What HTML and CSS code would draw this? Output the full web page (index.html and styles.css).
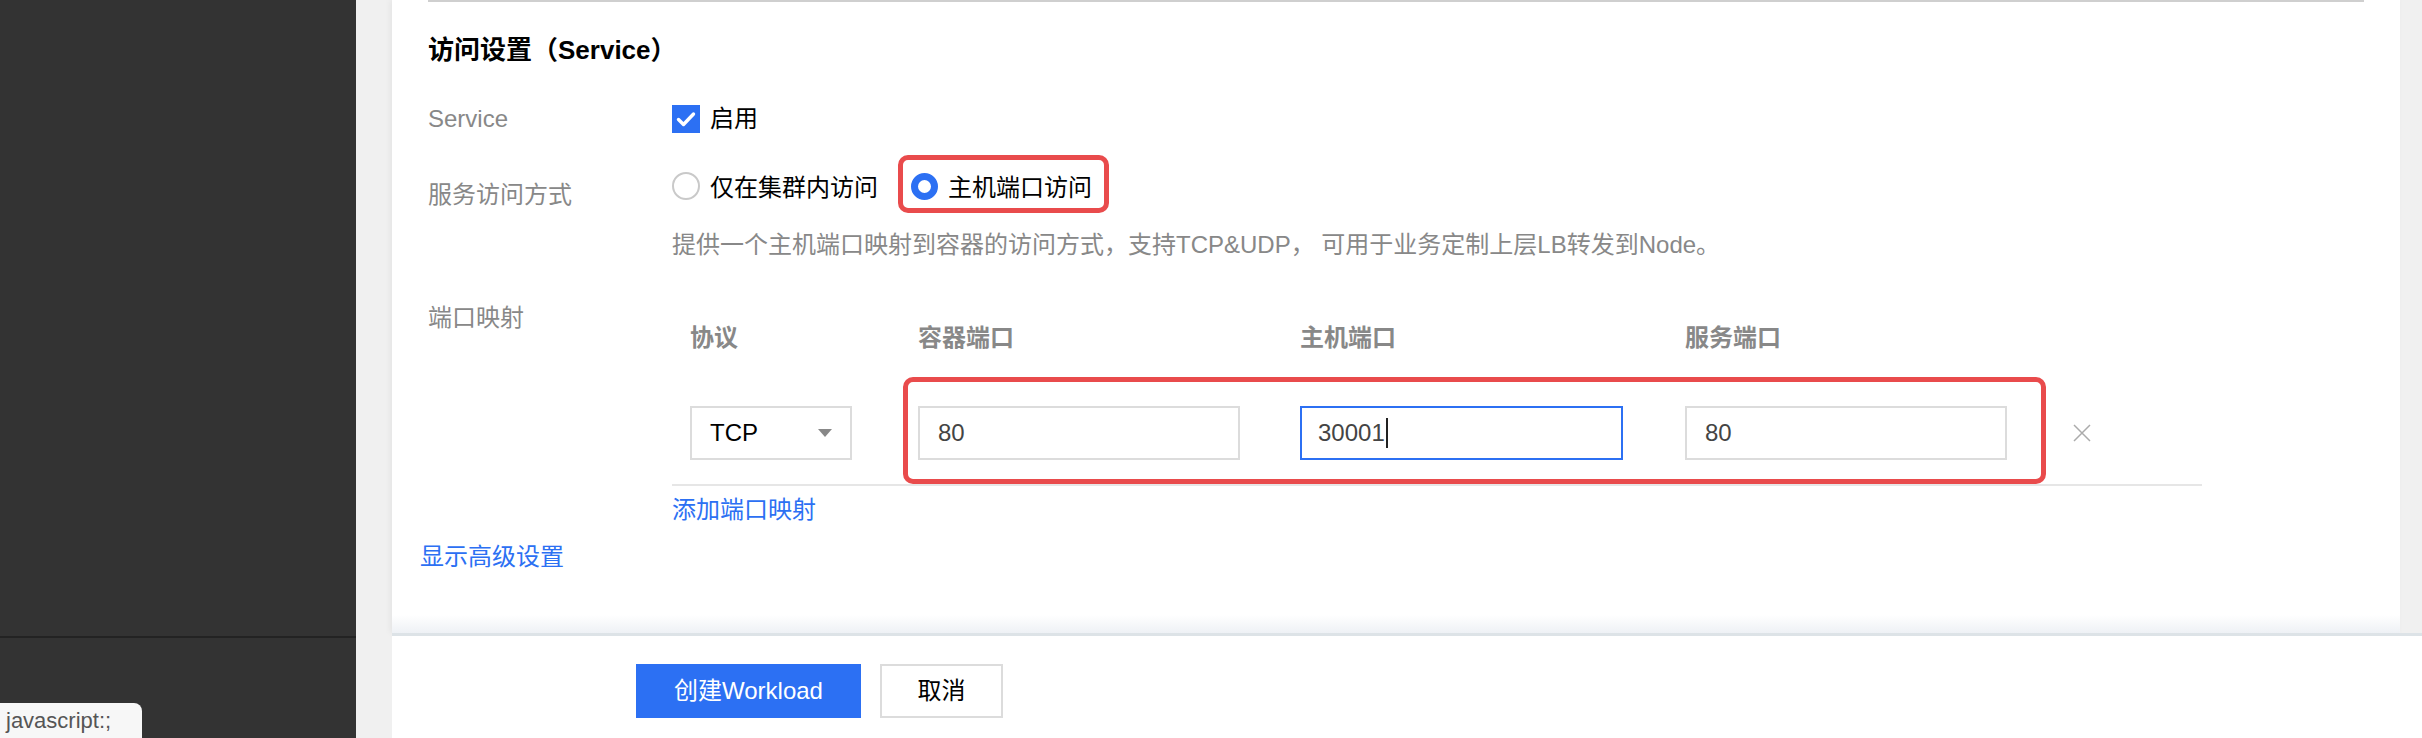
FILE: index.html
```html
<!DOCTYPE html>
<html lang="zh-CN">
<head>
<meta charset="utf-8">
<title>访问设置</title>
<link rel="stylesheet" href="styles.css">
</head>
<body>
<aside class="sidebar">
  <div class="sidebar-top"></div>
  <div class="sidebar-bottom"></div>
</aside>
<div class="main">
  <div class="panel">
    <section class="section">
      <h2 class="title">访问设置（Service）</h2>

      <div class="row row-service">
        <div class="label">Service</div>
        <div class="control">
          <label class="check">
            <svg class="checkbox" width="28" height="28" viewBox="0 0 28 28"><rect width="28" height="28" fill="#2c70f3"/><path d="M6.5 14.5 L11.5 19.5 L21.5 9" fill="none" stroke="#fff" stroke-width="3.4" stroke-linecap="round" stroke-linejoin="round"/></svg>
            <span>启用</span>
          </label>
        </div>
      </div>

      <div class="row row-mode">
        <div class="label label-offset">服务访问方式</div>
        <div class="control options">
          <label class="radio"><span class="radio-dot"></span><span>仅在集群内访问</span></label>
          <label class="radio radio-on"><span class="radio-dot"></span><span>主机端口访问</span><span class="mark mark-radio"></span></label>
        </div>
      </div>
      <p class="desc">提供一个主机端口映射到容器的访问方式，支持TCP&amp;UDP， 可用于业务定制上层LB转发到Node。</p>

      <div class="row row-ports">
        <div class="label">端口映射</div>
        <div class="control">
          <div class="ports">
            <div class="ports-grid ports-head">
              <div>协议</div>
              <div>容器端口</div>
              <div>主机端口</div>
              <div>服务端口</div>
              <div></div>
            </div>
            <div class="ports-grid ports-row">
              <div class="select"><span>TCP</span><span class="caret"></span></div>
              <div class="input">80</div>
              <div class="input input-focus">30001<span class="text-cursor"></span></div>
              <div class="input">80</div>
              <div class="close">
                <svg width="18" height="18" viewBox="0 0 18 18"><path d="M1 1 L17 17 M17 1 L1 17" stroke="#ababab" stroke-width="1.5"/></svg>
              </div>
              <span class="mark mark-row"></span>
            </div>
          </div>
          <a class="link add-link" href="javascript:;">添加端口映射</a>
        </div>
      </div>

      <a class="link adv-link" href="javascript:;">显示高级设置</a>
    </section>
  </div>
  <footer class="footer">
    <button class="btn btn-primary">创建Workload</button>
    <button class="btn btn-default">取消</button>
  </footer>
</div>
<div class="status-tip">javascript:;</div>
</body>
</html>
```

FILE: styles.css
```css
* { box-sizing: border-box; }

html, body {
  margin: 0;
  padding: 0;
}

body {
  width: 2422px;
  height: 738px;
  overflow: hidden;
  display: flex;
  font-family: "Liberation Sans", "Noto Sans CJK SC", sans-serif;
  font-size: 24px;
  line-height: 36px;
  color: #000;
  position: relative;
}

.sidebar {
  width: 356px;
  flex: none;
  background: #333333;
  display: flex;
  flex-direction: column;
}

.sidebar-top {
  height: 638px;
  border-bottom: 2px solid #232323;
}

.main {
  flex: 1;
  background: #f0f0f0;
  display: flex;
  flex-direction: column;
  padding-left: 36px;
}

.panel {
  height: 633px;
  margin-right: 22px;
  background: #fff;
  padding: 0 36px;
  box-shadow: -2px 0 6px rgba(0, 0, 0, 0.05);
  background-image: linear-gradient(to bottom, #ffffff 0, #ffffff 615px, #eef1f5 633px);
}

.section {
  border-top: 2px solid #cfcfcf;
}

.title {
  margin: 30px 0 0;
  height: 36px;
  font-size: 26px;
  line-height: 36px;
  font-weight: 700;
}

.row {
  display: flex;
  align-items: flex-start;
}

.label {
  width: 244px;
  height: 36px;
  flex: none;
  color: #888;
}

.label-offset { padding-top: 7px; height: 43px; }

.row-service { margin-top: 33px; height: 36px; }
.row-mode { margin-top: 33px; height: 36px; }
.row-ports { margin-top: 37px; }

.check {
  display: flex;
  align-items: center;
  gap: 10px;
  height: 36px;
}

.checkbox { display: block; }

.options {
  display: flex;
  gap: 33px;
  height: 36px;
}

.radio {
  position: relative;
  display: flex;
  align-items: center;
  gap: 10px;
  height: 36px;
}

.radio-dot {
  width: 28px;
  height: 28px;
  border-radius: 50%;
  border: 2px solid #c9c9c9;
  background: #fff;
  flex: none;
  margin-top: -4px;
}

.radio-on .radio-dot {
  border: 7px solid #2c70f3;
  width: 27px;
  height: 27px;
}

.desc {
  margin: 21px 0 0 244px;
  height: 36px;
  color: #888;
}

.ports {
  width: 1530px;
  padding: 20px 0 24px 18px;
  border-bottom: 2px solid #e6e6e6;
}

.ports-grid {
  display: grid;
  grid-template-columns: 228px 382px 385px 388px 18px;
  align-items: center;
}

.ports-head {
  height: 36px;
  color: #888;
  font-weight: 700;
}

.ports-head > div { height: 36px; }

.ports-row {
  position: relative;
  height: 54px;
  margin-top: 50px;
}

.select {
  width: 162px;
  height: 54px;
  border: 2px solid #dcdcdc;
  display: flex;
  align-items: center;
  justify-content: space-between;
  padding: 0 18px;
  color: #000;
}

.caret {
  width: 0;
  height: 0;
  border-left: 7px solid transparent;
  border-right: 7px solid transparent;
  border-top: 8px solid #888;
}

.input {
  width: 322px;
  height: 54px;
  border: 2px solid #dcdcdc;
  display: flex;
  align-items: center;
  padding: 0 18px;
  color: #444;
}

.input-focus {
  width: 323px;
  border-color: #2c70f3;
  padding-left: 16px;
}

.text-cursor {
  display: inline-block;
  width: 2px;
  height: 30px;
  background: #222;
  margin-left: 1px;
}

.close {
  display: flex;
  align-items: center;
  height: 54px;
}

.close svg { display: block; }

.mark {
  position: absolute;
  border: 5px solid #e94b4c;
  border-radius: 10px;
  pointer-events: none;
}

.mark-radio {
  left: -13px;
  right: -17px;
  top: -15px;
  bottom: -7px;
}

.mark-row {
  left: 213px;
  top: -29px;
  width: 1143px;
  height: 107px;
}

.link {
  display: block;
  height: 36px;
  color: #2c70f3;
  text-decoration: none;
}

.add-link {
  margin-top: 6px;
  width: max-content;
}

.adv-link {
  margin: 11px 0 0 -8px;
  width: max-content;
}

.footer {
  flex: 1;
  background: #fff;
  border-top: 3px solid #dde3e7;
  padding: 28px 0 0 244px;
  display: flex;
  align-items: flex-start;
  gap: 19px;
}

.btn {
  height: 54px;
  font-family: "Liberation Sans", "Noto Sans CJK SC", sans-serif;
  font-size: 24px;
  line-height: 36px;
  padding: 0;
  cursor: pointer;
}

.btn-primary {
  width: 225px;
  background: #2c70f3;
  color: #fff;
  border: none;
}

.btn-default {
  width: 123px;
  background: #fff;
  color: #000;
  border: 2px solid #dcdcdc;
}

.status-tip {
  position: absolute;
  left: 0;
  bottom: 0;
  width: 142px;
  height: 35px;
  background: #f7f7f7;
  border-top-right-radius: 8px;
  color: #555;
  font-size: 22px;
  line-height: 35px;
  padding-left: 6px;
}
```
